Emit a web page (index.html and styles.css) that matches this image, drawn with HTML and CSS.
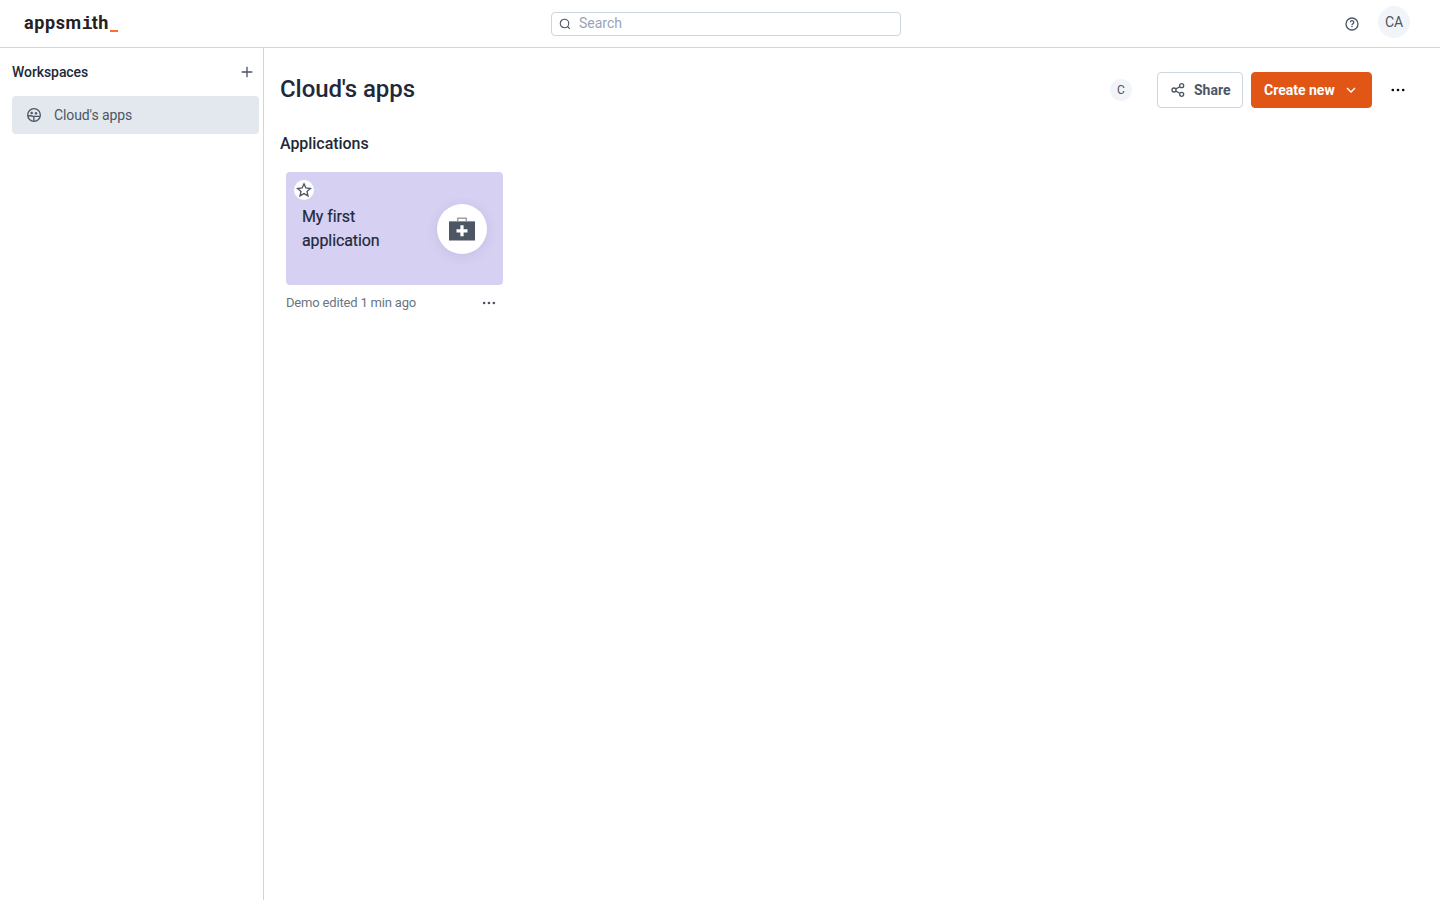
FILE: index.html
```html
<!DOCTYPE html>
<html lang="en">
<head>
  <meta charset="UTF-8" />
  <meta name="viewport" content="width=device-width, initial-scale=1.0"/>
  <title>Cloud's apps | Appsmith</title>
  <link rel="stylesheet" href="styles.css">
</head>
<body>
  <header class="header">
    <a class="logo">appsm<span class="logo-i">i</span>th<span class="logo-cursor"></span></a>
    <div class="search">
      <svg width="12" height="12" viewBox="0 0 24 24" fill="none" stroke="#4c5664" stroke-width="2.2"><circle cx="11" cy="11" r="8.5"/><path d="M17 17L21.5 21.5"/></svg>
      <input type="text" placeholder="Search"/>
    </div>
    <div class="header-right">
      <svg width="16" height="16" viewBox="0 0 24 24" fill="none" stroke="#4c5664" stroke-width="2"><circle cx="12" cy="12" r="9"/><path d="M9.6 9.5A2.5 2.5 0 1 1 13.2 11.7Q12 12.3 12 14"/><path d="M12 15v2"/></svg>
      <div class="avatar">CA</div>
    </div>
  </header>

  <div class="page">
    <aside class="sidebar">
      <div class="sidebar-title">
        <h2>Workspaces</h2>
        <svg width="16" height="16" viewBox="0 0 24 24" fill="#4c5664"><path d="M11 11V4H13V11H20V13H13V20H11V13H4V11Z"/></svg>
      </div>
      <a class="workspace">
        <svg width="16" height="16" viewBox="0 0 24 24" fill="none" stroke="#4c5664" stroke-width="2"><circle cx="12" cy="12" r="9.5"/><path d="M3 13.5Q7 12.5 11 14H20.8M11.8 14V21"/><circle cx="8.5" cy="9" r="1.5" fill="#4c5664" stroke-width="1"/><circle cx="15" cy="9.5" r="1.5" fill="#4c5664" stroke-width="1"/></svg>
        <span>Cloud's apps</span>
      </a>
    </aside>

    <main class="content">
      <div class="content-header">
        <h1>Cloud's apps</h1>
        <div class="avatar small">C</div>
        <button class="btn share">
          <svg width="16" height="16" viewBox="0 0 24 24" fill="none" stroke="#4c5664" stroke-width="2"><circle cx="6" cy="12" r="3"/><circle cx="17.5" cy="5.5" r="3"/><circle cx="17.5" cy="18.5" r="3"/><path d="M8.8 10.4L14.7 7.1M8.8 13.6L14.7 16.9"/></svg>
          <span>Share</span>
        </button>
        <button class="btn create">
          <span>Create new</span>
          <svg width="16" height="16" viewBox="0 0 24 24" fill="none" stroke="#fff" stroke-width="2"><path d="M6 9L12 15L18 9"/></svg>
        </button>
        <svg class="more" width="16" height="16" viewBox="0 0 24 24" fill="#090707"><circle cx="4.2" cy="12" r="2"/><circle cx="12" cy="12" r="2"/><circle cx="19.8" cy="12" r="2"/></svg>
      </div>

      <h3>Applications</h3>

      <div class="app">
        <div class="app-card">
          <div class="favorite">
            <svg width="16" height="16" viewBox="0 0 24 24" fill="none" stroke="#4c5664" stroke-width="2"><path d="M12 2.8L14.8 9L21.6 9.7L16.5 14.2L18 20.9L12 17.4L6 20.9L7.5 14.2L2.4 9.7L9.2 9Z"/></svg>
          </div>
          <div class="app-name">My first<br/>application</div>
          <div class="app-icon">
            <svg width="26" height="26" viewBox="0 0 26 26">
              <path d="M8.7 5V2.2H17.3V5" fill="none" stroke="#9ba0a4" stroke-width="1.4"/>
              <rect y="5.5" width="26" height="19" fill="#4c5664"/>
              <path d="M0 5.5H26" stroke="#8b9299"/>
              <path d="M13 9.3V20.3M7.5 14.8H18.5" stroke="#fff" stroke-width="3.2"/>
            </svg>
          </div>
        </div>
        <div class="app-footer">
          <span>Demo edited 1 min ago</span>
          <svg width="16" height="16" viewBox="0 0 24 24" fill="#4c5664"><circle cx="4.7" cy="12" r="2"/><circle cx="12" cy="12" r="2"/><circle cx="19.3" cy="12" r="2"/></svg>
        </div>
      </div>
    </main>
  </div>
</body>
</html>
```
FILE: styles.css
```css
* {
  box-sizing: border-box;
}
body {
  margin: 0;
  height: 100vh;
  display: flex;
  flex-direction: column;
  font-family: Roboto, sans-serif;
  font-size: 14px;
  color: #4c5664;
  background: #fff;
}
h1, h2, h3 {
  margin: 0;
  font-weight: 500;
  color: #1e293b;
}
svg {
  display: block;
  flex-shrink: 0;
}
.header {
  height: 48px;
  display: flex;
  align-items: center;
  padding: 0 30px 0 24px;
  border-bottom: 1px solid #cdd5df;
}
.logo {
  width: 140px;
  display: flex;
  align-items: baseline;
  font-size: 18px;
  line-height: 24px;
  font-weight: 700;
  letter-spacing: 0.6px;
  color: #222;
}
.logo-i {
  font-family: "Liberation Mono", monospace;
  letter-spacing: -0.9px;
}
.logo-cursor {
  width: 8px;
  height: 2px;
  margin-left: 1px;
  transform: translateY(3px);
  background: #ff6d2d;
}
.search {
  width: 350px;
  height: 24px;
  display: flex;
  align-items: center;
  gap: 8px;
  padding: 0 7px;
  margin: 0 auto 0 387px;
  border: 1px solid #cdd5df;
  border-radius: 4px;
}
.search input {
  flex: 1;
  border: none;
  outline: none;
  padding: 0 0 1px;
  font: inherit;
  line-height: 20px;
  background: none;
}
.search input::placeholder {
  color: #99a4b3;
}
.header-right {
  display: flex;
  align-items: center;
  gap: 18px;
}
.avatar {
  width: 32px;
  height: 32px;
  margin-bottom: 4px;
  display: flex;
  align-items: center;
  justify-content: center;
  border-radius: 50%;
  background: #f1f5f9;
}
.avatar.small {
  width: 22px;
  height: 22px;
  margin: 0 25px 0 auto;
  font-size: 12px;
}
.page {
  flex: 1;
  display: flex;
}
.sidebar {
  width: 264px;
  padding: 12px 4px 0 12px;
  border-right: 1px solid #cdd5df;
}
.sidebar-title {
  height: 24px;
  display: flex;
  align-items: center;
  justify-content: space-between;
  padding-right: 4px;
}
.sidebar-title h2 {
  font-size: 14px;
  letter-spacing: -0.08px;
}
.workspace {
  height: 38px;
  margin-top: 12px;
  padding-left: 14px;
  display: flex;
  align-items: center;
  gap: 12px;
  border-radius: 4px;
  letter-spacing: -0.1px;
  background: #e3e8ef;
}
.content {
  flex: 1;
  padding: 24px 34px 0 16px;
}
.content-header {
  height: 36px;
  display: flex;
  align-items: center;
}
.content-header h1 {
  font-size: 24px;
  line-height: 32px;
  letter-spacing: -0.08px;
  padding-bottom: 2px;
}
.btn {
  height: 36px;
  display: flex;
  align-items: center;
  gap: 8px;
  padding: 0 12px;
  font: inherit;
  font-weight: 700;
  border: 1px solid #cdd5df;
  border-radius: 4px;
  background: #fff;
  color: #4c5664;
}
.share {
  width: 86px;
  margin-right: 8px;
}
.create {
  width: 121px;
  color: #fff;
  border-color: #e15615;
  background: #e15615;
}
.more {
  margin-left: 18px;
}
h3 {
  margin-top: 24px;
  font-size: 16px;
  line-height: 24px;
  letter-spacing: -0.05px;
}
.app {
  width: 217px;
  margin: 16px 0 0 6px;
}
.app-card {
  position: relative;
  height: 113px;
  display: flex;
  align-items: center;
  justify-content: space-between;
  padding: 1px 16px 0;
  border-radius: 4px;
  background: #d6d1f2;
}
.favorite {
  position: absolute;
  top: 8px;
  left: 8px;
  width: 20px;
  height: 20px;
  padding: 2px;
  border-radius: 50%;
  background: #fff;
}
.app-name {
  font-size: 16px;
  line-height: 24px;
  letter-spacing: -0.1px;
  -webkit-text-stroke: 0.2px;
  color: #1e293b;
}
.app-icon {
  width: 50px;
  height: 50px;
  display: flex;
  align-items: center;
  justify-content: center;
  border-radius: 50%;
  background: #fff;
  box-shadow: 0 2px 12px rgba(76, 56, 140, 0.12);
}
.app-footer {
  display: flex;
  align-items: center;
  justify-content: space-between;
  margin-top: 8px;
  padding-right: 6px;
  font-size: 13px;
  line-height: 20px;
  letter-spacing: -0.18px;
  color: #6a7585;
}
```
